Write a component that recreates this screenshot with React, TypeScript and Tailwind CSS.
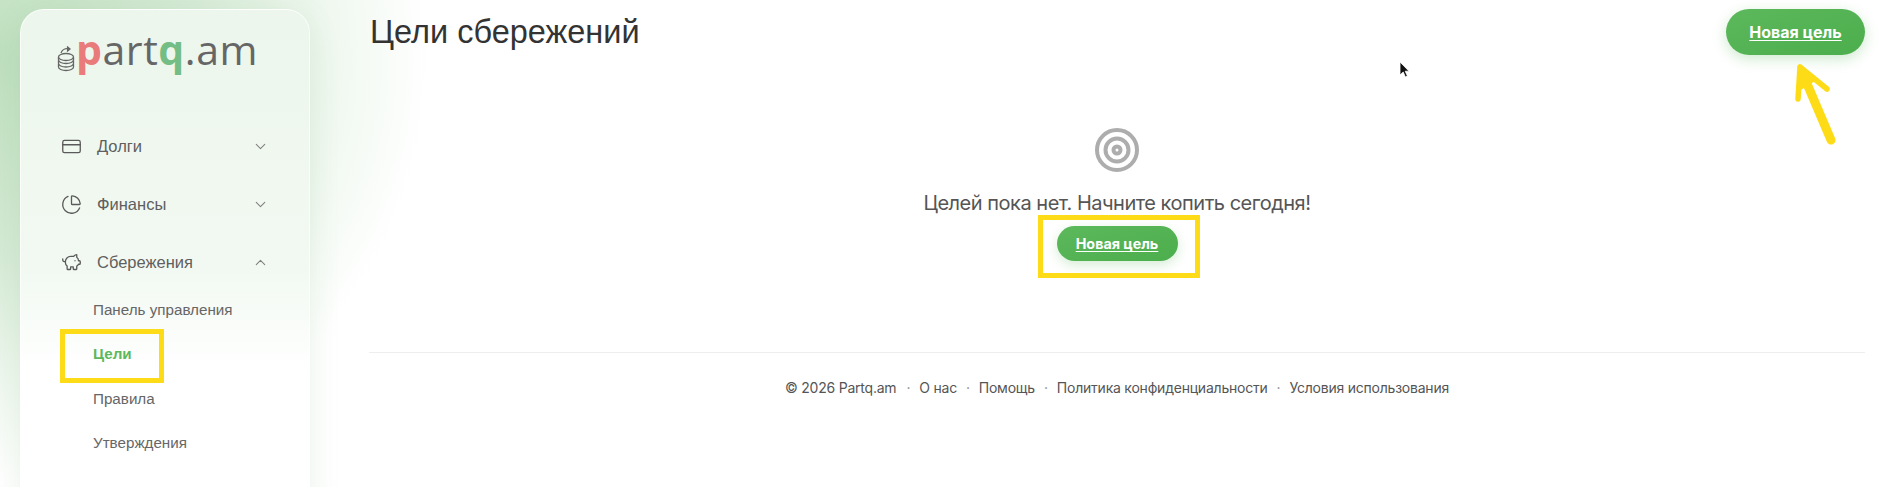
import { ChevronDown, ChevronUp, CreditCard, PiggyBank, ChartPie } from "lucide-react"

const navItems = [
    { label: "Долги", icon: CreditCard, open: false },
    { label: "Финансы", icon: ChartPie, open: false },
    { label: "Сбережения", icon: PiggyBank, open: true },
]

const subItems = ["Панель управления", "Цели", "Правила", "Утверждения"]

const footerLinks = ["О нас", "Помощь", "Политика конфиденциальности", "Условия использования"]

const CoinsLogo = () => (
    <svg width="20" height="28" viewBox="0 0 20 28" fill="none" stroke="#666" strokeWidth="1.3">
        <path d="M5 9c1-3 4-5 8-4" />
        <path d="M11 2.5l3 2.5-3 2.5" fill="#666" />
        <ellipse cx="10" cy="13" rx="7.5" ry="3.5" />
        <path d="M2.5 13v3c0 2 3.4 3.5 7.500 3.500s7.500-1.500 7.500-3.500v-3" />
        <path d="M2.500 16.500v3c0 2 3.400 3.500 7.500 3.500s7.500-1.500 7.500-3.500v-3" />
        <path d="M2.500 20v3c0 2 3.400 3.500 7.500 3.500s7.500-1.500 7.500-3.500v-3" />
    </svg>
)

const NewGoalButton = ({ className }: { className: string }) => (
    <button className={`rounded-full bg-gradient-to-br from-[#5cb85c] to-[#4cae4c] font-['Inter',sans-serif] font-bold text-white underline underline-offset-2 ${className}`}>
        Новая цель
    </button>
)

export default function App() {
    return (
        <div className="relative flex h-[487px] w-[1899px] overflow-hidden bg-white bg-[radial-gradient(ellipse_430px_420px_at_0px_60px,#bfe0bf_0%,#d5ead5_45%,#eef7ee_75%,#ffffff_100%)]">
            <aside className="ml-5 mt-[9px] h-[520px] w-[290px] shrink-0 rounded-t-[24px] border border-white/70 bg-gradient-to-b from-[#ecf6ec] via-[#f2f9f2] via-50% to-white to-70% px-10 shadow-[0_8px_32px_rgba(80,150,80,0.12)]">
                <div className="-ml-[5px] flex h-[62px] items-end pt-2">
                    <CoinsLogo />
                    <div className="font-['Open_Sans',sans-serif] text-[41px] font-medium leading-[46px] tracking-[0.55px] text-[#666]">
                        <span className="font-bold text-[#ea7b7b]">p</span>
                        art
                        <span className="font-bold text-[#74bd85]">q</span>
                        .am
                    </div>
                </div>

                <nav className="mt-[45px] font-['Liberation_Sans',sans-serif] text-[#5f5f5f]">
                    {navItems.map((item) => {
                        const Icon = item.icon
                        const Chevron = item.open ? ChevronUp : ChevronDown
                        return (
                            <div key={item.label} className="flex h-[58px] items-center">
                                <Icon size={21} strokeWidth={1.5} className="text-[#5a5a5a]" />
                                <span className="ml-[15px] flex-1 text-[16.500px]">{item.label}</span>
                                <Chevron size={17} strokeWidth={1.5} className="text-[#808080]" />
                            </div>
                        )
                    })}
                    <div className="-mt-[3px] ml-[32px] text-[15.200px]">
                        {subItems.map((sub) => (
                            <div key={sub} className={`flex h-[44.500px] items-center ${sub === "Цели" ? "font-bold text-[#5cb85c]" : "text-[#666]"}`}>
                                {sub}
                            </div>
                        ))}
                    </div>
                </nav>
            </aside>

            <main className="ml-[59px] mr-[34px] flex-1">
                <div className="flex items-start justify-between">
                    <h1 className="ml-px mt-[13px] font-['Liberation_Sans',sans-serif] text-[32.500px] font-normal leading-[38px] text-[#333]">
                        Цели сбережений
                    </h1>
                    <NewGoalButton className="mt-[9px] h-[46px] w-[139px] text-[16px] shadow-[0_4px_14px_rgba(92,184,92,0.3)]" />
                </div>

                <div className="mt-[73px] flex flex-col items-center">
                    <svg width="44" height="44" viewBox="0 0 44 44" fill="none" stroke="#adadad" strokeWidth="4">
                        <circle cx="22" cy="22" r="20" />
                        <circle cx="22" cy="22" r="11.500" />
                        <circle cx="22" cy="22" r="3.500" />
                    </svg>
                    <p className="mt-[16px] font-['Inter',sans-serif] text-[20px] leading-[30px] tracking-[-0.48px] text-[#555]">
                        Целей пока нет. Начните копить сегодня!
                    </p>
                    <NewGoalButton className="mt-[8px] h-[35px] w-[121px] text-[14.300px] shadow-[0_4px_12px_rgba(92,184,92,0.25)]" />
                </div>

                <footer className="mt-[91px] border-t border-[#eeeeee] pt-[25px]">
                    <div className="flex items-center justify-center gap-[9px] font-['Inter',sans-serif] text-[14px] leading-5 tracking-[-0.22px] text-[#555]">
                        <span className="mr-px">© 2026 Partq.am</span>
                        {footerLinks.map((link) => (
                            <div key={link} className="flex items-center gap-[9px]">
                                <span className="text-[#888]">·</span>
                                <span>{link}</span>
                            </div>
                        ))}
                    </div>
                </footer>
            </main>

            {/* yellow annotations drawn over the page */}
            <div className="absolute left-[60px] top-[329px] h-[54px] w-[104px] border-[5px] border-[#fddc17]" />
            <div className="absolute left-[1038px] top-[215px] h-[63px] w-[162px] border-[5px] border-[#fddc17]" />
            <svg className="absolute left-[1785px] top-[60px]" width="60" height="90" viewBox="0 0 60 90" fill="none" stroke="#fddc17" strokeLinecap="round" strokeLinejoin="round">
                <path d="M46 80L17 12" strokeWidth="9" />
                <path d="M15 7L13 39M15 7L42 29" strokeWidth="5.500" />
                <path d="M15 7L14 30L30 20z" fill="#fddc17" strokeWidth="2" />
            </svg>
            <svg className="absolute left-[1399px] top-[61px]" width="12" height="18" viewBox="0 0 12 18">
                <path d="M1 1v13l3.200-3 2.200 5 2-1-2.200-4.800H10z" fill="#111" stroke="#fff" strokeWidth="0.8" />
            </svg>
        </div>
    )
}
